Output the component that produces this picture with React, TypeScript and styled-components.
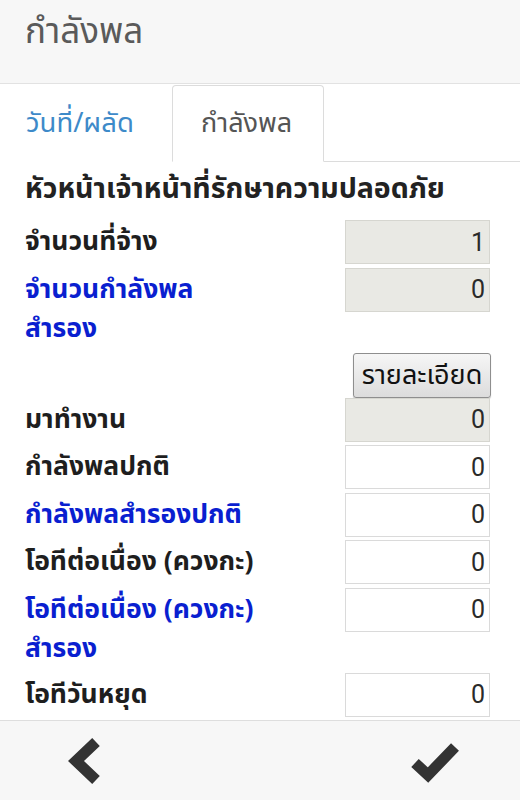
import React from "react";
import styled, { createGlobalStyle } from "styled-components";

const Global = createGlobalStyle`
  html, body { margin: 0; padding: 0; background: #fff; }
  body { font-family: "Noto Sans Thai", "Noto Sans", "DejaVu Sans", sans-serif; }
  * { box-sizing: border-box; }
`;

const Page = styled.div`
  width: 520px;
  height: 800px;
  display: flex;
  flex-direction: column;
  overflow: hidden;
  background: #fff;
`;

const Header = styled.header`
  height: 84px;
  flex: none;
  background: #f7f7f7;
  border-bottom: 1px solid #e2e2e2;
  padding: 10px 0 0 25px;
`;

const Title = styled.h1`
  margin: 0;
  font-weight: 400;
  font-size: 35px;
  line-height: 46px;
  color: #5a5a5a;
`;

const TabBar = styled.nav`
  height: 78px;
  flex: none;
  display: flex;
  align-items: flex-end;
  border-bottom: 1px solid #dcdcdc;
`;

const Tab = styled.div<{ $active?: boolean }>`
  height: 77px;
  margin-bottom: -1px;
  padding: 0 0 0 ${(p) => (p.$active ? "28px" : "25px")};
  display: flex;
  align-items: center;
  font-size: ${(p) => (p.$active ? "27px" : "27.5px")};
  white-space: nowrap;
  color: ${(p) => (p.$active ? "#555" : "#3d8ac9")};
  background: #fff;
  border: 1px solid ${(p) => (p.$active ? "#dcdcdc" : "transparent")};
  border-bottom-color: ${(p) => (p.$active ? "#fff" : "transparent")};
  border-radius: 4px 4px 0 0;
  width: ${(p) => (p.$active ? "152px" : "172px")};
`;

const Content = styled.main`
  flex: 1;
  overflow: hidden;
  padding: 10px 30px 0 25px;
  display: flex;
  flex-direction: column;
`;

const SectionTitle = styled.div`
  font-weight: 700;
  font-size: 28.5px;
  line-height: 36px;
  color: #222;
  white-space: nowrap;
  margin-bottom: 12px;
`;

const Row = styled.div<{ $after?: number }>`
  display: flex;
  align-items: flex-start;
  justify-content: space-between;
  margin-bottom: ${(p) => p.$after ?? 3.5}px;
`;

const Label = styled.div<{ $reserve?: boolean }>`
  font-weight: 700;
  font-size: 26.5px;
  line-height: 39px;
  padding: 3px 0 0;
  color: ${(p) => (p.$reserve ? "#0a1fd0" : "#1e1e1e")};
`;

const Line = styled.span`
  display: block;
  white-space: nowrap;
`;

const Field = styled.div<{ $readonly?: boolean }>`
  flex: none;
  width: 145px;
  height: 44px;
  border: 1px solid ${(p) => (p.$readonly ? "#d6d6d0" : "#dadada")};
  background: ${(p) => (p.$readonly ? "#e9e9e4" : "#fff")};
  font-family: Roboto, "Liberation Sans", sans-serif;
  font-size: 25px;
  color: #2a2a2a;
  display: flex;
  align-items: center;
  justify-content: flex-end;
  padding-right: 4px;
`;

const ButtonRow = styled.div`
  display: flex;
  justify-content: flex-end;
  margin: 1px -1px 0 0;
`;

const DetailButton = styled.button`
  width: 138px;
  height: 45px;
  padding: 0;
  border: 1px solid #8e8e8e;
  border-radius: 3px;
  background: linear-gradient(#f6f6f6, #dcdcdc);
  box-shadow: 0 1px 1px rgba(0, 0, 0, 0.25);
  font-family: inherit;
  font-size: 27px;
  color: #111;
  white-space: nowrap;
  overflow: hidden;
`;

const Footer = styled.footer`
  height: 80px;
  flex: none;
  background: #f7f7f7;
  border-top: 1px solid #dedede;
  display: flex;
  align-items: center;
  justify-content: space-between;
  padding: 0 60px 0 67px;
`;

const IconButton = styled.div`
  display: flex;
  align-items: center;
  justify-content: center;
`;

type Item = { label: string[]; value: string; readonly?: boolean; reserve?: boolean; after?: number };

const top: Item[] = [
  { label: ["จำนวนที่จ้าง"], value: "1", readonly: true },
  { label: ["จำนวนกำลังพล", "สำรอง"], value: "0", readonly: true, reserve: true, after: 3 },
];

const bottom: Item[] = [
  { label: ["มาทำงาน"], value: "0", readonly: true },
  { label: ["กำลังพลปกติ"], value: "0" },
  { label: ["กำลังพลสำรองปกติ"], value: "0", reserve: true },
  { label: ["โอทีต่อเนื่อง (ควงกะ)"], value: "0" },
  { label: ["โอทีต่อเนื่อง (ควงกะ)", "สำรอง"], value: "0", reserve: true, after: 4 },
  { label: ["โอทีวันหยุด"], value: "0" },
];

const renderRow = (it: Item, i: number) => (
  <Row key={i} $after={it.after}>
    <Label $reserve={it.reserve}>
      {it.label.map((l, j) => (
        <Line key={j}>{l}</Line>
      ))}
    </Label>
    <Field $readonly={it.readonly}>{it.value}</Field>
  </Row>
);

export default function App() {
  return (
    <Page>
      <Global />
      <Header>
        <Title>กำลังพล</Title>
      </Header>
      <TabBar>
        <Tab>วันที่/ผลัด</Tab>
        <Tab $active>กำลังพล</Tab>
      </TabBar>
      <Content>
        <SectionTitle>หัวหน้าเจ้าหน้าที่รักษาความปลอดภัย</SectionTitle>
        {top.map(renderRow)}
        <ButtonRow>
          <DetailButton>รายละเอียด</DetailButton>
        </ButtonRow>
        {bottom.map(renderRow)}
      </Content>
      <Footer>
        <IconButton>
          <svg width="34" height="46" viewBox="0 0 34 46">
            <polyline points="29,4 9,23 29,42" fill="none" stroke="#333" strokeWidth="11" strokeLinejoin="miter" strokeMiterlimit="4" />
          </svg>
        </IconButton>
        <IconButton>
          <svg width="50" height="44" viewBox="0 0 50 44">
            <polyline points="5,24 18,36 45,8" fill="none" stroke="#333" strokeWidth="11" strokeLinejoin="miter" strokeMiterlimit="4" />
          </svg>
        </IconButton>
      </Footer>
    </Page>
  );
}
